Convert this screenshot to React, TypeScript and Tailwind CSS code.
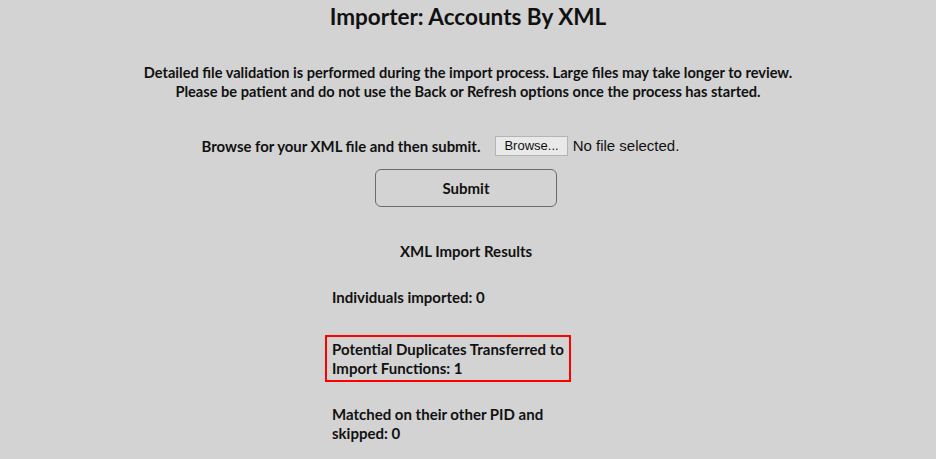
export default function App() {
  return (
    <div className="min-h-[459px] bg-[#d3d3d3] text-[#111] font-['Lato','Liberation_Sans',sans-serif] font-bold">
      <div className="flex flex-col items-center pt-[4px]">
        <h1 className="text-[22.5px] leading-[26px] font-bold">Importer: Accounts By XML</h1>

        <div className="mt-[33px] text-center text-[14.6px] leading-[19px]">
          <p>Detailed file validation is performed during the import process. Large files may take longer to review.</p>
          <p>Please be patient and do not use the Back or Refresh options once the process has started.</p>
        </div>

        <div className="mt-[35px] mr-[55px] flex items-center text-[14.9px] leading-[20px]">
          <span>Browse for your XML file and then submit.</span>
          <button className="ml-[15px] h-[20px] border border-[#b4b4b4] bg-[#e9e9e9] px-[8px] text-[13px] leading-[18px] font-normal font-['Liberation_Sans',sans-serif]">
            Browse...
          </button>
          <span className="ml-[5px] font-['Liberation_Sans',sans-serif] font-normal text-[15px]">No file selected.</span>
        </div>

        <button className="mt-[13px] mr-[4px] h-[38px] w-[182px] rounded-[6px] border border-[#6b6b6b] text-[15px]">
          Submit
        </button>

        <div className="mt-[35px] w-[282px] ml-[-4px] text-[15px] leading-[19px]">
          <p className="text-center">XML Import Results</p>
          <div className="mt-[27px] w-[246px] flex flex-col">
            <p className="px-[7px]">Individuals imported: 0</p>
            <p className="mt-[28px] border-2 border-[#ff0000] pl-[5px] pr-[2px] pt-[3px] pb-[2px]">
              Potential Duplicates Transferred to Import Functions: 1
            </p>
            <p className="mt-[23px] px-[7px] pr-[20px]">Matched on their other PID and skipped: 0</p>
          </div>
        </div>
      </div>
    </div>
  );
}
